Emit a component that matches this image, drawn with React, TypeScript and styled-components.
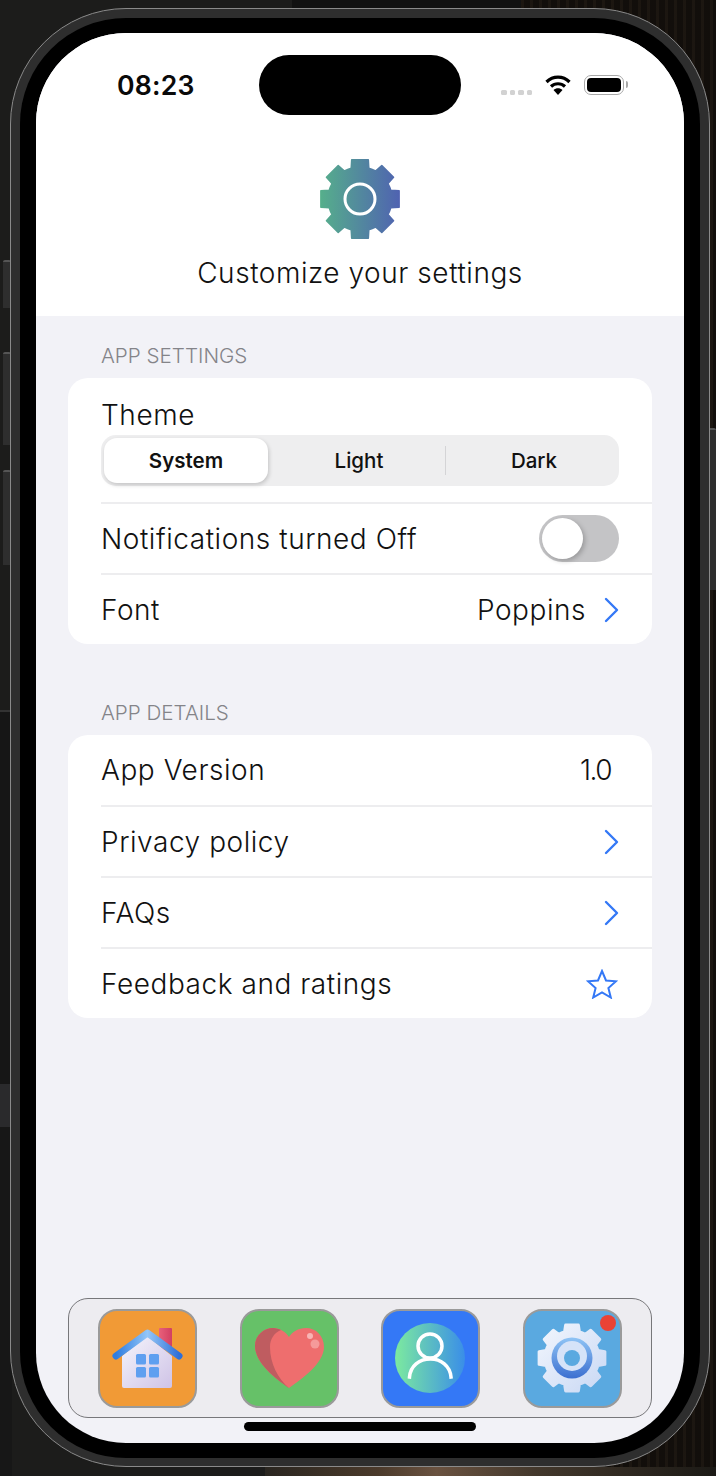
import React, { FunctionComponent } from 'react';
import styled, { createGlobalStyle } from 'styled-components';

const GlobalStyle = createGlobalStyle`
  html, body {
    margin: 0;
    padding: 0;
    background: #181818;
  }
  * {
    box-sizing: border-box;
  }
`;

const Backdrop = styled.div`
  position: relative;
  width: 716px;
  height: 1476px;
  overflow: hidden;
  padding: 8px 6px 9px 10px;
  background:
    repeating-linear-gradient(90deg, rgba(70, 55, 40, 0.14) 0 3px, rgba(0, 0, 0, 0.16) 3px 9px) right top / 195px 100% no-repeat,
    linear-gradient(90deg, #1c1c1b 0 292px, #111 292px 521px, #15110d 521px);
`;

const LeftPanel = styled.div`
  position: absolute;
  left: 0;
  top: 710px;
  width: 12px;
  height: 766px;
  border-top: 2px solid #333;
  background: linear-gradient(180deg, #161616 0 372px, #2a2a2c 372px 415px, #171717 415px);
`;

const BottomWood = styled.div`
  position: absolute;
  left: 265px;
  right: 0;
  bottom: 0;
  height: 9px;
  background: linear-gradient(90deg, #2a2620 0, #4b3a2b 25%, #6a5240 38%, #43382c 60%, #1c1a16 100%);
`;

const SideButton = styled.div<{ $side: 'left' | 'right'; $top: number; $height: number }>`
  position: absolute;
  top: ${(p) => p.$top}px;
  height: ${(p) => p.$height}px;
  width: 8px;
  ${(p) => (p.$side === 'left' ? 'left: 3px;' : 'right: 0;')}
  background: #2e2e2e;
  border-top: 2px solid #555;
  border-radius: 2px 2px 0 0;
`;

const Device = styled.div`
  position: relative;
  height: 1459px;
  padding: 9px;
  padding-bottom: 8px;
  border: 1px solid #8a8a8a;
  border-radius: 116px;
  background: #2e2e2e;
`;

const Bezel = styled.div`
  height: 100%;
  padding: 15px 16px;
  border-radius: 106px;
  background: #000;
`;

const Screen = styled.div`
  position: relative;
  display: flex;
  flex-direction: column;
  height: 100%;
  overflow: hidden;
  border-radius: 90px;
  background: #f2f2f7;
  font-family: Inter, 'Liberation Sans', sans-serif;
  color: #111;
`;

const Island = styled.div`
  position: absolute;
  left: 223px;
  top: 22px;
  width: 202px;
  height: 60px;
  border-radius: 30px;
  background: #000;
`;

const Header = styled.header`
  display: flex;
  flex-direction: column;
  align-items: center;
  height: 283px;
  background: #fff;
`;

const StatusBar = styled.div`
  align-self: stretch;
  display: flex;
  align-items: center;
  justify-content: space-between;
  height: 44px;
  margin-top: 30px;
  padding: 0 60px 0 81px;
`;

const Clock = styled.span`
  font-size: 26.6px;
  font-weight: 600;
  letter-spacing: 0.2px;
  color: #0a0a0a;
`;

const StatusIcons = styled.div`
  display: flex;
  align-items: center;
`;

const SignalDots = styled.div`
  display: flex;
  gap: 3px;
  margin: 15px 13px 0 0;
`;

const SignalDot = styled.span`
  width: 5.5px;
  height: 5.5px;
  border-radius: 1.5px;
  background: #d2d2d2;
`;

const Battery = styled.div`
  position: relative;
  width: 40px;
  height: 20px;
  margin-left: 13px;
  padding: 2px;
  border: 1.5px solid #a8a8a8;
  border-radius: 7px;
  &::before {
    content: '';
    display: block;
    height: 100%;
    border-radius: 4px;
    background: #000;
  }
  &::after {
    content: '';
    position: absolute;
    right: -5px;
    top: 5px;
    width: 2px;
    height: 7px;
    border-radius: 0 2px 2px 0;
    background: #a8a8a8;
  }
`;

const HeaderIcon = styled.svg`
  display: block;
  width: 84px;
  height: 84px;
  margin-top: 50px;
`;

const Title = styled.h1`
  margin: 14px 0 0;
  font-size: 28px;
  line-height: 36px;
  font-weight: 300;
  letter-spacing: 0.55px;
`;

const Main = styled.main`
  flex: 1;
  padding: 28px 32px 0;
`;

const SectionLabel = styled.div<{ $spaced?: boolean }>`
  height: 24px;
  margin: ${(p) => (p.$spaced ? '57px' : '0')} 0 10px 33px;
  font-size: 20.6px;
  line-height: 24px;
  font-weight: 300;
  color: #848489;
`;

const Card = styled.section`
  border-radius: 20px;
  background: #fff;
  overflow: hidden;
`;

const ThemeBlock = styled.div`
  height: 124px;
  padding: 20px 33px 0;
`;

const RowLabel = styled.span`
  font-size: 28px;
  line-height: 36px;
  font-weight: 300;
  letter-spacing: 0.55px;
`;

const ThemeLabel = styled(RowLabel)`
  display: block;
  height: 37px;
  line-height: 35px;
`;

const Segmented = styled.div`
  display: grid;
  grid-template-columns: 164px 178px 1fr;
  height: 51px;
  padding: 3px;
  border-radius: 15px;
  background: #eeeeef;
`;

const Segment = styled.div<{ $active?: boolean; $divider?: boolean; $nudge?: number }>`
  position: relative;
  display: flex;
  align-items: center;
  justify-content: center;
  padding-left: ${(p) => p.$nudge ?? 0}px;
  font-size: 20.5px;
  font-weight: ${(p) => (p.$active ? 600 : 450)};
  color: #111;
  ${(p) => p.$active && 'background: #fff; border-radius: 13px; box-shadow: 1px 2px 4px rgba(0, 0, 0, 0.18);'}
  ${(p) =>
    p.$divider &&
    `&::after {
      content: '';
      position: absolute;
      right: 0;
      top: 8px;
      bottom: 8px;
      width: 1px;
      background: #d4d4d6;
    }`}
`;

const Row = styled.div`
  display: flex;
  align-items: center;
  justify-content: space-between;
  height: 71px;
  margin-left: 33px;
  padding-right: 33px;
  border-top: 2px solid #ededef;
`;

const FirstRow = styled(Row)`
  height: 70px;
  border-top: 0;
`;

const RowValue = styled(RowLabel)`
  display: flex;
  align-items: center;
  gap: 18px;
`;

const VersionValue = styled(RowLabel)`
  margin-right: 8px;
  letter-spacing: -1.5px;
`;

const Toggle = styled.div`
  width: 80px;
  height: 47px;
  padding: 3px;
  border-radius: 24px;
  background: #c4c4c6;
`;

const ToggleKnob = styled.div`
  width: 41px;
  height: 41px;
  border-radius: 50%;
  background: #fff;
  box-shadow: 2px 2px 5px rgba(0, 0, 0, 0.22);
`;

const ChevronIcon = styled.svg`
  display: block;
  width: 15px;
  height: 26px;
  fill: none;
  stroke: #3478f6;
  stroke-width: 2.4;
  stroke-linecap: round;
  stroke-linejoin: round;
`;

const StarIcon = styled.svg`
  display: block;
  width: 32px;
  height: 30px;
  margin-right: 1px;
  fill: none;
  stroke: #3478f6;
  stroke-width: 2;
  stroke-linejoin: miter;
`;

const TabBar = styled.nav`
  display: grid;
  grid-template-columns: repeat(4, 99px);
  justify-content: space-between;
  align-items: center;
  height: 120px;
  margin: 0 32px;
  padding: 0 29px;
  border: 1px solid #77777a;
  border-radius: 20px;
  background: #edecf0;
`;

const Tab = styled.div<{ $color: string }>`
  position: relative;
  width: 99px;
  height: 99px;
  overflow: visible;
  border: 2px solid #9a9a9a;
  border-radius: 19px;
  background: ${(p) => p.$color};
`;

const TabArt = styled.svg`
  display: block;
  position: absolute;
  left: -2px;
  top: -2px;
  width: 99px;
  height: 99px;
`;

const TabBadge = styled.span`
  position: absolute;
  right: 4px;
  top: 4px;
  width: 16px;
  height: 16px;
  border-radius: 50%;
  background: #ea4335;
`;

const HomeIndicator = styled.div`
  flex: none;
  width: 232px;
  height: 9px;
  margin: 4px auto 12px;
  border-radius: 5px;
  background: #000;
`;

// builds a cog outline around (cx, cy); tooth shape is given in degrees
const gearPath = (cx: number, cy: number, outer: number, root: number, teeth = 8, tipHalf = 10, baseHalf = 14) => {
  const pt = (r: number, deg: number) => {
    const a = ((deg - 90) * Math.PI) / 180;
    return `${(cx + r * Math.cos(a)).toFixed(2)} ${(cy + r * Math.sin(a)).toFixed(2)}`;
  };
  let d = '';
  for (let i = 0; i < teeth; i++) {
    const c = (360 / teeth) * i;
    d += `${i === 0 ? 'M' : `A${root} ${root} 0 0 1`} ${pt(root, c - baseHalf)} `;
    d += `L${pt(outer, c - tipHalf)} L${pt(outer, c + tipHalf)} L${pt(root, c + baseHalf)} `;
  }
  return `${d}A${root} ${root} 0 0 1 ${pt(root, -baseHalf)}Z`;
};

const Chevron: FunctionComponent = () => (
  <ChevronIcon viewBox="0 0 15 26">
    <polyline points="2,2 13,13 2,24" />
  </ChevronIcon>
);

const HomeArt: FunctionComponent = () => (
  <TabArt viewBox="0 0 99 99">
    <defs>
      <linearGradient id="wall" x1="0" y1="0" x2="1" y2="1">
        <stop offset="0" stopColor="#f5f5fc" />
        <stop offset="1" stopColor="#cfc3e6" />
      </linearGradient>
      <linearGradient id="roof" x1="0" y1="0" x2="1" y2="0">
        <stop offset="0" stopColor="#2f7de0" />
        <stop offset="0.5" stopColor="#93c6f8" />
        <stop offset="1" stopColor="#2f6fd6" />
      </linearGradient>
      <linearGradient id="chimney" x1="0" y1="0" x2="1" y2="0">
        <stop offset="0" stopColor="#e8607a" />
        <stop offset="1" stopColor="#d23f62" />
      </linearGradient>
    </defs>
    <rect x="61" y="19" width="13" height="22" rx="1" fill="url(#chimney)" />
    <path d="M24 47 L49 27 L74 47 V77 a2 2 0 0 1 -2 2 H26 a2 2 0 0 1 -2 -2 Z" fill="url(#wall)" />
    <path d="M18 47 L49.500 24 L81 47" fill="none" stroke="url(#roof)" strokeWidth="7" strokeLinecap="round" strokeLinejoin="round" />
    <g fill="#5f9ff0">
      <rect x="38" y="45" width="10" height="10.500" rx="1.500" />
      <rect x="51" y="45" width="10" height="10.500" rx="1.500" />
      <rect x="38" y="58" width="10" height="10.500" rx="1.500" />
      <rect x="51" y="58" width="10" height="10.500" rx="1.500" />
    </g>
  </TabArt>
);

const HeartArt: FunctionComponent = () => (
  <TabArt viewBox="0 0 99 99">
    <path d="M49 79 C36 70 15 54 15 37 C15 26 24 19 33 19 C40 19 46 23 49 28 C52 23 58 19 66 19 C76 19 84 27 84 38 C84 54 62 70 49 79 Z" fill="#ee6e6e" />
    <path d="M49 79 C36 70 15 54 15 37 C15 26 24 19 33 19 C36 19 39 20 41 21 C34 24 30 30 30 38 C30 54 38 70 49 79 Z" fill="#bf5c60" />
    <circle cx="70" cy="27" r="3" fill="#f8b4b4" />
    <circle cx="75" cy="35" r="4.500" fill="#f59a9a" />
  </TabArt>
);

const PersonArt: FunctionComponent = () => (
  <TabArt viewBox="0 0 99 99">
    <defs>
      <linearGradient id="avatar" x1="0" y1="0" x2="1" y2="0">
        <stop offset="0" stopColor="#7cea9f" />
        <stop offset="1" stopColor="#3a8ee8" />
      </linearGradient>
    </defs>
    <circle cx="49" cy="49" r="35" fill="url(#avatar)" />
    <circle cx="49" cy="37" r="12" fill="none" stroke="#fff" strokeWidth="3.500" />
    <path d="M28.500 68 C29.500 57 38 50 49.500 50 C60 50 69 57 70 68" fill="none" stroke="#fff" strokeWidth="3.500" strokeLinecap="square" />
  </TabArt>
);

const CogArt: FunctionComponent = () => (
  <TabArt viewBox="0 0 99 99">
    <defs>
      <linearGradient id="cogBody" x1="0" y1="0" x2="1" y2="1">
        <stop offset="0" stopColor="#f2f6fd" />
        <stop offset="1" stopColor="#c9d8f4" />
      </linearGradient>
      <linearGradient id="cogRing" x1="0" y1="0" x2="0" y2="1">
        <stop offset="0" stopColor="#8fc4f5" />
        <stop offset="1" stopColor="#3c6fd0" />
      </linearGradient>
    </defs>
    <path d={gearPath(49, 49, 33.5, 27, 8, 11, 16)} fill="url(#cogBody)" stroke="url(#cogBody)" strokeWidth="3" strokeLinejoin="round" />
    <circle cx="49" cy="49" r="20.500" fill="url(#cogRing)" />
    <circle cx="49" cy="47" r="15" fill="#d6e3f8" />
    <circle cx="49" cy="49" r="8" fill="#5aa9e0" />
  </TabArt>
);

const App: FunctionComponent = () => {
  return (
    <Backdrop>
      <GlobalStyle />
      <LeftPanel />
      <BottomWood />
      <SideButton $side="left" $top={260} $height={48} />
      <SideButton $side="left" $top={352} $height={93} />
      <SideButton $side="left" $top={470} $height={95} />
      <SideButton $side="right" $top={428} $height={162} />
      <Device>
        <Bezel>
          <Screen>
            <Island />
            <Header>
              <StatusBar>
                <Clock>08:23</Clock>
                <StatusIcons>
                  <SignalDots>
                    <SignalDot />
                    <SignalDot />
                    <SignalDot />
                    <SignalDot />
                  </SignalDots>
                  <svg width="26" height="20" viewBox="0 0 26 20">
                    <path d="M1.500 7 C8 0.500 18 0.500 24.500 7" fill="none" stroke="#000" strokeWidth="3.200" />
                    <path d="M6 11.500 C10 7.800 16 7.800 20 11.500" fill="none" stroke="#000" strokeWidth="3.200" />
                    <path d="M13 20 L8.500 15 C11 12.700 15 12.700 17.500 15 Z" fill="#000" />
                  </svg>
                  <Battery />
                </StatusIcons>
              </StatusBar>
              <HeaderIcon viewBox="0 0 84 84">
                <defs>
                  <linearGradient id="headerGear" gradientUnits="userSpaceOnUse" x1="0" y1="0" x2="84" y2="0">
                    <stop offset="0" stopColor="#56b18a" />
                    <stop offset="1" stopColor="#4f60b2" />
                  </linearGradient>
                </defs>
                <path d={gearPath(42, 42, 40, 32, 8, 12, 16)} fill="url(#headerGear)" stroke="url(#headerGear)" strokeWidth="1.500" strokeLinejoin="round" />
                <circle cx="42" cy="42" r="15" fill="none" stroke="#fff" strokeWidth="3" />
              </HeaderIcon>
              <Title>Customize your settings</Title>
            </Header>
            <Main>
              <SectionLabel>APP SETTINGS</SectionLabel>
              <Card>
                <ThemeBlock>
                  <ThemeLabel>Theme</ThemeLabel>
                  <Segmented>
                    <Segment $active>System</Segment>
                    <Segment $divider $nudge={4}>Light</Segment>
                    <Segment $nudge={6}>Dark</Segment>
                  </Segmented>
                </ThemeBlock>
                <Row>
                  <RowLabel>Notifications turned Off</RowLabel>
                  <Toggle>
                    <ToggleKnob />
                  </Toggle>
                </Row>
                <Row>
                  <RowLabel>Font</RowLabel>
                  <RowValue>
                    Poppins
                    <Chevron />
                  </RowValue>
                </Row>
              </Card>
              <SectionLabel $spaced>APP DETAILS</SectionLabel>
              <Card>
                <FirstRow>
                  <RowLabel>App Version</RowLabel>
                  <VersionValue>1.0</VersionValue>
                </FirstRow>
                <Row>
                  <RowLabel>Privacy policy</RowLabel>
                  <Chevron />
                </Row>
                <Row>
                  <RowLabel>FAQs</RowLabel>
                  <Chevron />
                </Row>
                <Row>
                  <RowLabel>Feedback and ratings</RowLabel>
                  <StarIcon viewBox="0 0 32 30">
                    <path d="M16 2 L20 11.500 L30 12.300 L22.400 19 L24.800 28.500 L16 23.400 L7.200 28.500 L9.600 19 L2 12.300 L12 11.500 Z" />
                  </StarIcon>
                </Row>
              </Card>
            </Main>
            <TabBar>
              <Tab $color="#f19a36">
                <HomeArt />
              </Tab>
              <Tab $color="#66c168">
                <HeartArt />
              </Tab>
              <Tab $color="#3478f6">
                <PersonArt />
              </Tab>
              <Tab $color="#5aa9e0">
                <CogArt />
                <TabBadge />
              </Tab>
            </TabBar>
            <HomeIndicator />
          </Screen>
        </Bezel>
      </Device>
    </Backdrop>
  );
};

export default App;
